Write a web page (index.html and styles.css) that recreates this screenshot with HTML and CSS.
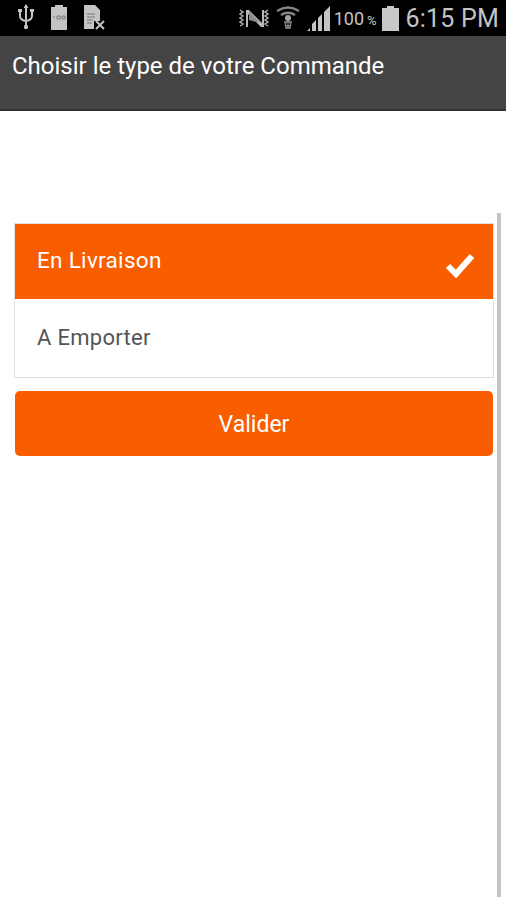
FILE: index.html
```html
<!DOCTYPE html>
<html lang="fr">
<head>
    <meta charset="UTF-8">
    <meta name="viewport" content="width=device-width, initial-scale=1.0">
    <title>Choisir le type de votre Commande</title>
    <link rel="stylesheet" href="styles.css">
</head>
<body>
    <div class="status-bar">
        <div class="status-left">
            <svg class="icon" width="16" height="26" viewBox="0 0 16 26">
                <path d="M8 1v23M2 7v5q0 4 6 5q6-1 6-5V7" fill="none" stroke="#c4c4c4" stroke-width="2"/>
                <circle cx="8" cy="23" r="2.2" fill="#c4c4c4"/>
                <path d="M8 0l2.4 4H5.600zM0 5h4v3H0zM12 5h4v3h-4z" fill="#c4c4c4"/>
            </svg>
            <svg class="icon" width="16" height="25" viewBox="0 0 16 25">
                <path d="M4 0h8v2h4v23H0V2h4z" fill="#c4c4c4"/>
                <path d="M2 12h2M6 11h3v3H6zM11 11h3v3h-3z" fill="none" stroke="#777" stroke-width="1"/>
            </svg>
            <svg class="icon" width="21" height="25" viewBox="0 0 21 25">
                <path d="M0 0h11l5 5v11H10v8H0z" fill="#c4c4c4"/>
                <path d="M3 9h8M3 12h8M3 15h6M3 18h5" stroke="#777" stroke-width="1"/>
                <path d="M12 16l8 8M20 16l-8 8" stroke="#c4c4c4" stroke-width="2"/>
            </svg>
        </div>
        <div class="status-right">
            <svg class="icon" width="30" height="20" viewBox="0 0 30 20">
                <path d="M1 2l3 2-3 2 3 2-3 2 3 2-3 2 3 2-3 2M29 2l-3 2 3 2-3 2 3 2-3 2 3 2-3 2 3 2" fill="none" stroke="#b0b0b0" stroke-width="1.500"/>
                <path d="M7 2h3l13 13V2h2v17h-3L9 6v13H7z" fill="#b8b8b8"/>
                <path d="M10 3l11 12-11-3z" fill="#8c8c8c"/>
            </svg>
            <svg class="icon" width="24" height="24" viewBox="0 0 24 24">
                <path d="M1 5q11-7 22 0M5 9q7-4.500 14 0" fill="none" stroke="#858585" stroke-width="2.500"/>
                <circle cx="12" cy="12" r="3" fill="#a8a8a8"/>
                <path d="M8 15h8l-1.500 8h-5z" fill="#777"/>
                <path d="M10 17h1.500v2H10zM12.500 17H14v2h-1.500z" fill="#222"/>
            </svg>
            <svg class="icon signal" width="24" height="25" viewBox="0 0 24 25">
                <path d="M0 25l3-3v3zM5 25v-7l4-4v11zM11 25V12l4-4v17zM17 25V6l6-6v25z" fill="#c4c4c4"/>
            </svg>
            <span class="battery-text">100<small>%</small></span>
            <svg class="icon" width="17" height="25" viewBox="0 0 17 25">
                <path d="M5 0h7v2h5v23H0V2h5z" fill="#c8c8c8"/>
            </svg>
            <span class="clock">6:15 PM</span>
        </div>
    </div>
    <header class="app-bar">
        <h1>Choisir le type de votre Commande</h1>
    </header>
    <main class="content">
        <ul class="choices">
            <li class="choice selected">
                <span>En Livraison</span>
                <svg width="30" height="26" viewBox="0 0 30 26">
                    <path d="M3 14l8 8L27 4" fill="none" stroke="#fff" stroke-width="6"/>
                </svg>
            </li>
            <li class="choice">
                <span>A Emporter</span>
            </li>
        </ul>
        <button type="button" class="validate">Valider</button>
    </main>
    <div class="scrollbar"></div>
</body>
</html>
```

FILE: styles.css
```css
body {
    margin: 0;
    height: 900px;
    overflow: hidden;
    position: relative;
    background: #fff;
    font-family: Roboto, "Liberation Sans", sans-serif;
}
.status-bar {
    height: 36px;
    box-sizing: border-box;
    padding: 4px 7px 0 18px;
    background: #000;
    display: flex;
    justify-content: space-between;
    color: #c4c4c4;
}
.status-left {
    display: flex;
    gap: 17px;
    height: 26px;
    align-items: center;
}
.status-right {
    display: flex;
    align-items: center;
    height: 28px;
}
.icon {
    display: block;
}
.status-right .icon {
    margin-right: 7px;
}
.status-right .signal {
    margin-right: 3px;
}
.battery-text {
    font-size: 18px;
    margin-right: 5px;
}
.battery-text small {
    font-size: 13px;
    margin-left: 3px;
}
.clock {
    font-size: 25px;
    letter-spacing: 0.2px;
}
.app-bar {
    height: 75px;
    box-sizing: border-box;
    padding: 16px 12px 0;
    background: #444;
    border-bottom: 2px solid #333;
}
.app-bar h1 {
    margin: 0;
    font-size: 24px;
    font-weight: 400;
    line-height: 29px;
    color: #fff;
}
.content {
    padding: 112px 14px 0;
    width: 480px;
}
.choices {
    list-style: none;
    margin: 0;
    padding: 0;
    border: 1px solid #e0e0e0;
}
.choice {
    height: 78px;
    box-sizing: border-box;
    padding: 0 18px 2px 22px;
    display: flex;
    align-items: center;
    justify-content: space-between;
    font-size: 22px;
    letter-spacing: 0.3px;
    color: #555;
}
.choice.selected {
    height: 75px;
    padding-bottom: 0;
    background: #f85e00;
    color: #fff;
}
.choice.selected span {
    margin-bottom: 3px;
    font-size: 22.500px;
}
.choice.selected svg {
    margin-top: 6px;
}
.validate {
    display: block;
    width: 478px;
    height: 65px;
    margin: 13px 0 0 1px;
    padding: 2px 0 0;
    border: none;
    border-radius: 5px;
    background: #f85e00;
    color: #fff;
    font-family: inherit;
    font-size: 23px;
}
.scrollbar {
    position: absolute;
    left: 497px;
    top: 213px;
    width: 4px;
    height: 684px;
    background: #c4c4c4;
}
```
